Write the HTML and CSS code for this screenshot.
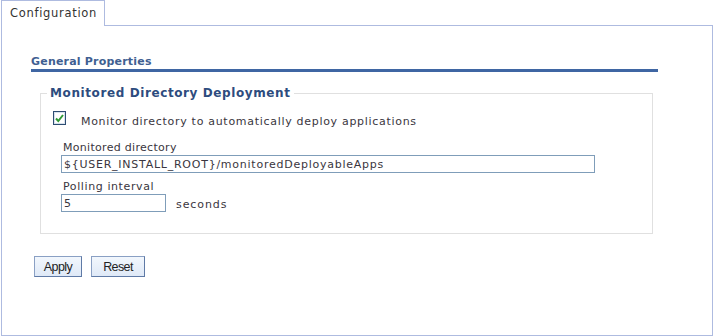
FILE: index.html
```html
<!DOCTYPE html>
<html lang="en">
<head>
    <meta charset="UTF-8">
    <title>Configuration</title>
    <link rel="stylesheet" href="styles.css">
</head>
<body>

<div class="page">
    <div class="tabbar">
        <div class="tab">Configuration</div>
        <div class="tab-filler"></div>
    </div>

    <div class="panel">
        <h2 class="section-title">General Properties</h2>

        <fieldset class="group">
            <legend>Monitored Directory Deployment</legend>

            <label class="check-row">
                <svg class="checkbox" width="13" height="14" viewBox="0 0 13 14">
                    <rect x="0.5" y="0.5" width="12" height="13" fill="#fff" stroke="#2d4d72"/>
                    <rect x="1.5" y="1.5" width="10" height="11" fill="none" stroke="#d8e2ee"/>
                    <path d="M3 7.5 L5.3 10 L10 4" fill="none" stroke="#2f9a35" stroke-width="2"/>
                </svg>
                <span>Monitor directory to automatically deploy applications</span>
            </label>

            <div class="field">
                <label class="field-label">Monitored directory</label>
                <input class="text-input wide" type="text" value="${USER_INSTALL_ROOT}/monitoredDeployableApps">
            </div>

            <div class="field">
                <label class="field-label">Polling interval</label>
                <div class="inline">
                    <input class="text-input short" type="text" value="5">
                    <span class="unit">seconds</span>
                </div>
            </div>
        </fieldset>

        <div class="buttons">
            <button class="btn apply">Apply</button>
            <button class="btn reset">Reset</button>
        </div>
    </div>
</div>

</body>
</html>
```

FILE: styles.css
```css
body {
    margin: 0;
    font-family: "DejaVu Sans", Verdana, sans-serif;
    font-size: 11px;
    letter-spacing: 0.5px;
    color: #3a3640;
    background-color: #fff;
}

.page {
    margin: 0 1px;
}

.tabbar {
    display: flex;
    height: 26px;
}

.tab {
    width: 104px;
    height: 26px;
    box-sizing: border-box;
    border: 1px solid #aebbe0;
    border-bottom: none;
    padding-left: 8px;
    line-height: 25px;
    font-size: 11.5px;
    letter-spacing: 0.7px;
    color: #333;
}

.tab-filler {
    flex: 1;
    border-bottom: 1px solid #aebbe0;
}

.panel {
    border: 1px solid #aebbe0;
    border-top: none;
    padding: 29px 0 0 29px;
    box-sizing: border-box;
    height: 310px;
}

.section-title {
    margin: 0 54px 0 0;
    font-size: 11px;
    font-weight: bold;
    letter-spacing: 0.2px;
    line-height: 14px;
    color: #3f5f92;
    border-bottom: 3px solid #3f66a3;
}

.group {
    margin: 14px 0 0 9px;
    width: 613px;
    box-sizing: border-box;
    border: 1px solid #e0e0e0;
    padding: 10px 12px 21px 12px;
}

.group legend {
    padding: 0 3px;
    margin-left: -6px;
    font-size: 12px;
    font-weight: bold;
    letter-spacing: 0.6px;
    line-height: 14px;
    color: #2d4c7e;
}

.check-row {
    display: flex;
    align-items: center;
    height: 16px;
}

.check-row span {
    margin-left: 15px;
    padding-top: 7px;
    letter-spacing: 0.7px;
}

.field {
    margin-left: 8px;
}

.field-label {
    display: block;
    margin-top: 15px;
    padding-left: 2px;
    line-height: 14px;
    letter-spacing: 0.3px;
}

.field + .field .field-label {
    margin-top: 7px;
    letter-spacing: 0.6px;
}

.text-input {
    display: block;
    height: 18px;
    box-sizing: border-box;
    margin: 0;
    border: 1px solid #7f9db9;
    padding: 0 2px;
    font-family: "DejaVu Sans", Verdana, sans-serif;
    font-size: 11px;
    letter-spacing: 0.75px;
    color: #3a3640;
    outline: none;
}

.wide {
    width: 534px;
}

.short {
    width: 105px;
}

.inline {
    display: flex;
    align-items: center;
}

.unit {
    margin-left: 10px;
    padding-top: 3px;
    letter-spacing: 0.9px;
}

.buttons {
    display: flex;
    gap: 9px;
    margin: 22px 0 0 3px;
}

.btn {
    height: 21px;
    padding: 0;
    border: 1px solid #8aa0c4;
    border-right-color: #5f7aa6;
    border-bottom-color: #5f7aa6;
    background: linear-gradient(#f2f7fd, #dfe9f7);
    font-family: "Liberation Sans", Arial, sans-serif;
    font-size: 12.5px;
    letter-spacing: -0.6px;
    color: #222;
}

.apply {
    width: 48px;
}

.reset {
    width: 54px;
}
```
